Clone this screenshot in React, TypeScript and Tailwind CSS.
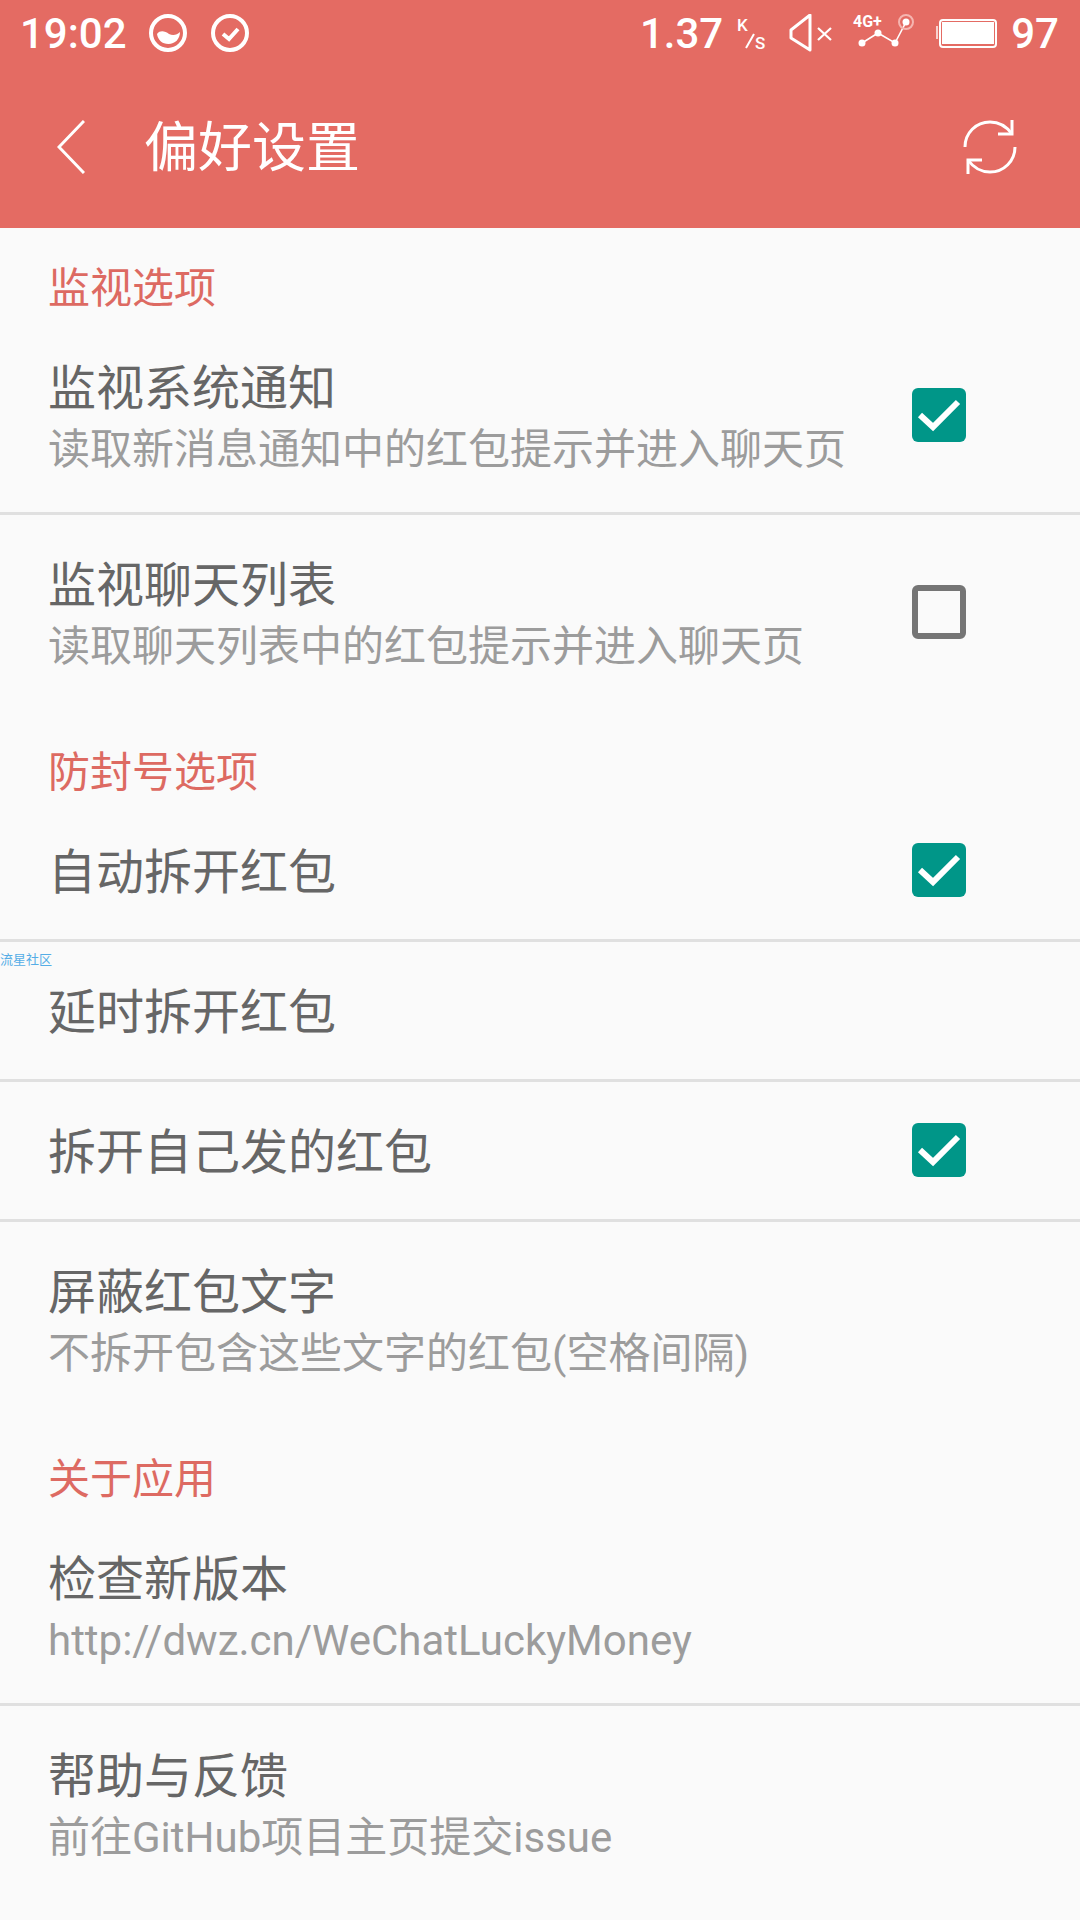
const cjk = "font-['Roboto','Noto_Sans_CJK_SC',sans-serif]";

function Checkbox({ checked }: { checked: boolean }) {
  if (!checked) {
    return <div className="h-[54px] w-[54px] shrink-0 rounded-[6px] border-[6px] border-[#757575]" />;
  }
  return (
    <div className="h-[54px] w-[54px] shrink-0 rounded-[6px] bg-[#009688]">
      <svg viewBox="0 0 54 54" className="h-[54px] w-[54px]">
        <path d="M8 27 L21 39 L46 14" fill="none" stroke="#fff" strokeWidth="6" />
      </svg>
    </div>
  );
}

function SectionTitle({ children }: { children: React.ReactNode }) {
  return (
    <div className="flex h-[90px] items-start px-[48px] pt-[32px] text-[42px] leading-[58px] text-[#dd6a62]">
      {children}
    </div>
  );
}

function Row({
  title,
  summary,
  checked,
  divider = true,
  mark,
}: {
  title: string;
  summary?: string;
  checked?: boolean;
  divider?: boolean;
  mark?: boolean;
}) {
  return (
    <div
      className={`relative flex items-center justify-between border-b-[3px] pl-[48px] pr-[114px] ${
        summary ? "h-[197px]" : "h-[140px] pb-[2px]"
      } ${divider ? "border-[#e0e0e0]" : "border-transparent"}`}
    >
      {mark && (
        <span className="absolute left-0 top-[10px] text-[13px] leading-[16px] text-[#55ade6]">流星社区</span>
      )}
      <div className="min-w-0 pt-[6px]">
        <div className="whitespace-nowrap text-[48px] leading-[64px] text-[#666666]">{title}</div>
        {summary && <div className="whitespace-nowrap text-[42px] leading-[58px] text-[#9c9c9c]">{summary}</div>}
      </div>
      {checked !== undefined && <Checkbox checked={checked} />}
    </div>
  );
}

function StatusBar() {
  return (
    <div className="flex h-[66px] items-center justify-between pl-[20px] pr-[21px] text-white">
      <div className="flex items-center">
        <span className="pt-[1px] text-[42px] font-medium leading-[66px]">19:02</span>
        <svg viewBox="0 0 38 38" className="ml-[22px] h-[38px] w-[38px]">
          <circle cx="19" cy="19" r="17" fill="none" stroke="#fff" strokeWidth="4" />
          <path d="M8 20 C11 16 16 17 20 20 C24 22 28 21 31 18 C31 25 26 30 19.5 30 C13 30 9 26 8 20 Z" fill="#fff" />
        </svg>
        <svg viewBox="0 0 38 38" className="ml-[24px] h-[38px] w-[38px]">
          <circle cx="19" cy="19" r="17" fill="none" stroke="#fff" strokeWidth="4" />
          <path d="M12 20 L18 25 L27 15" fill="none" stroke="#fff" strokeWidth="4" />
        </svg>
      </div>
      <div className="flex items-center">
        <span className="pt-[1px] text-[42px] font-medium leading-[66px]">1.37</span>
        <svg viewBox="0 0 32 38" className="ml-[12px] h-[38px] w-[32px]">
          <text x="2" y="17" fontSize="17" fontWeight="500" fill="#fff" fontFamily="Roboto">K</text>
          <path d="M19 20 L11 34" stroke="#fff" strokeWidth="2" />
          <text x="20" y="35" fontSize="17" fontWeight="500" fill="#fff" fontFamily="Roboto">S</text>
        </svg>
        <svg viewBox="0 0 44 38" className="ml-[22px] h-[38px] w-[44px]">
          <path d="M21 1 L21 36 L2 24 L2 16 Z" fill="none" stroke="#fff" strokeWidth="3" strokeLinejoin="round" />
          <path d="M29 14 L42 26 M42 14 L29 26" stroke="#fff" strokeWidth="2.2" />
        </svg>
        {/* taller box so the 4G+ label stays inside the svg */}
        <svg viewBox="0 -6 66 50" className="ml-[18px] h-[50px] w-[66px]">
          <text x="2" y="13" fontSize="16" fontWeight="700" fill="#fff" fontFamily="Roboto">4G+</text>
          <path d="M11 29 L27 19 L44 29 L55 8" fill="none" stroke="#fff" strokeWidth="1.6" />
          <circle cx="11" cy="29" r="3.5" fill="#fff" />
          <circle cx="27" cy="19" r="3.5" fill="#fff" />
          <circle cx="44" cy="29" r="3.5" fill="#fff" />
          <circle cx="55" cy="8" r="7" fill="none" stroke="#f5b5b0" strokeWidth="2" />
          <circle cx="55" cy="8" r="3.5" fill="#fff" />
        </svg>
        <svg viewBox="0 0 62 30" className="ml-[18px] h-[30px] w-[62px]">
          <rect x="1" y="8" width="2" height="13" fill="#fff" opacity="0.7" />
          <rect x="5" y="2" width="56" height="27" rx="3" fill="none" stroke="#fff" strokeWidth="2" />
          <rect x="7" y="4" width="52" height="22" fill="#fff" />
        </svg>
        <span className="ml-[14px] pt-[1px] text-[42px] font-medium leading-[66px]">97</span>
      </div>
    </div>
  );
}

export default function App() {
  return (
    <div className={`flex h-[1920px] w-[1080px] flex-col overflow-hidden bg-[#fafafa] ${cjk}`}>
      <div className="h-[228px] shrink-0 bg-[#e46b63]">
        <StatusBar />
        <div className="flex h-[162px] items-center justify-between pl-[57px] pr-[63px] text-white">
          <div className="flex items-center">
            <svg viewBox="0 0 28 54" className="h-[54px] w-[28px]">
              <path d="M27 1 L2 27 L27 53" fill="none" stroke="#fff" strokeWidth="3" />
            </svg>
            <span className="ml-[59px] pt-[3px] text-[54px] leading-[70px]">偏好设置</span>
          </div>
          <svg viewBox="0 0 54 56" className="h-[56px] w-[54px]">
            <path d="M2 28 C2 14 13 3 27 3 C36 3 44 8 49 15" fill="none" stroke="#fff" strokeWidth="3" />
            <path d="M49 1 L49 15 L35 15" fill="none" stroke="#fff" strokeWidth="3" />
            <path d="M52 28 C52 42 41 53 27 53 C18 53 10 48 5 41" fill="none" stroke="#fff" strokeWidth="3" />
            <path d="M5 55 L5 41 L19 41" fill="none" stroke="#fff" strokeWidth="3" />
          </svg>
        </div>
      </div>

      <SectionTitle>监视选项</SectionTitle>
      <Row title="监视系统通知" summary="读取新消息通知中的红包提示并进入聊天页" checked />
      <Row title="监视聊天列表" summary="读取聊天列表中的红包提示并进入聊天页" checked={false} divider={false} />

      <SectionTitle>防封号选项</SectionTitle>
      <Row title="自动拆开红包" checked />
      <Row title="延时拆开红包" mark />
      <Row title="拆开自己发的红包" checked />
      <Row title="屏蔽红包文字" summary="不拆开包含这些文字的红包(空格间隔)" divider={false} />

      <SectionTitle>关于应用</SectionTitle>
      <Row title="检查新版本" summary="http://dwz.cn/WeChatLuckyMoney" />
      <Row title="帮助与反馈" summary="前往GitHub项目主页提交issue" divider={false} />
    </div>
  );
}
